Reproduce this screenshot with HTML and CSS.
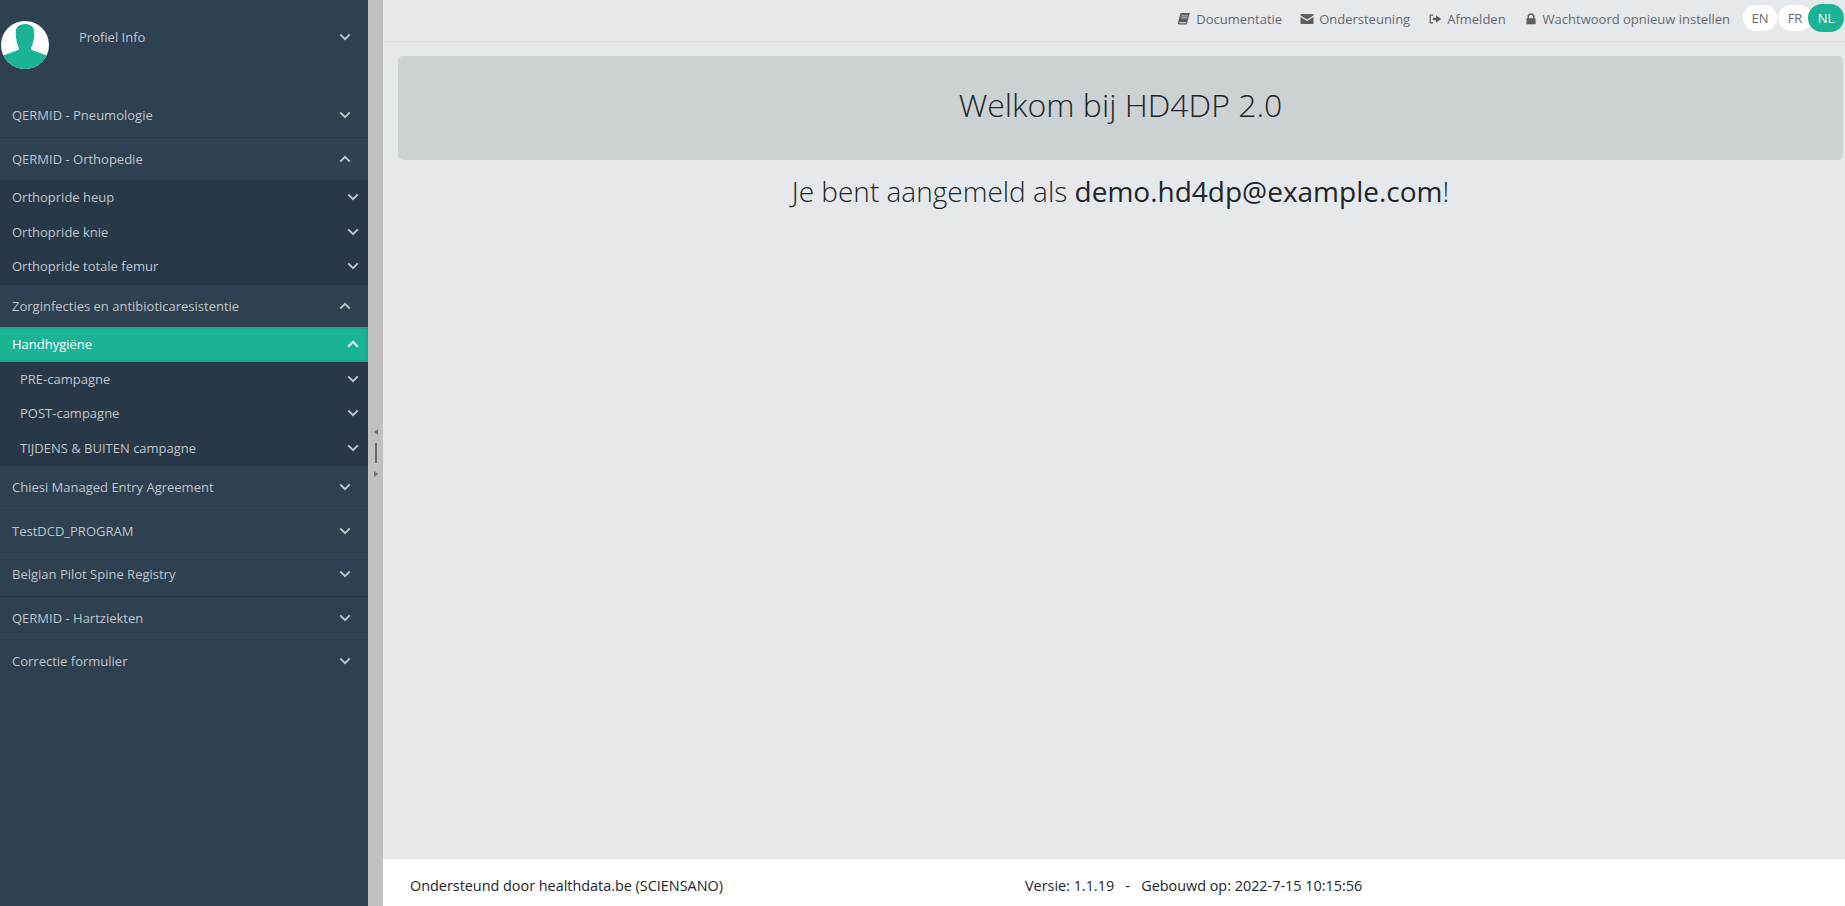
FILE: index.html
```html
<!DOCTYPE html>
<html lang="nl">
<head>
  <meta charset="UTF-8">
  <title>HD4DP 2.0</title>
  <link rel="stylesheet" href="styles.css">
</head>
<body>
  <svg class="icon-defs" aria-hidden="true">
    <symbol id="chev-down" viewBox="0 0 12 8"><path d="M1.2 1.4 6 6.2l4.8-4.8" fill="none" stroke="currentColor" stroke-width="1.9"/></symbol>
    <symbol id="chev-up" viewBox="0 0 12 8"><path d="M1.2 6.6 6 1.8l4.8 4.8" fill="none" stroke="currentColor" stroke-width="1.9"/></symbol>
  </svg>

  <!-- Sidebar -->
  <aside class="sidebar">
    <div class="profile">
      <svg class="avatar" viewBox="0 0 48 48">
        <circle cx="24" cy="24" r="24" fill="#fff"/>
        <clipPath id="avatarClip"><circle cx="24" cy="24" r="24"/></clipPath>
        <g clip-path="url(#avatarClip)" fill="#1ab394">
          <path d="M24 3c-6.500 0-9.300 3.500-9.300 9 0 5 1.300 11 3 14.500v2.300L1 35v13h46V35l-16.700-6.200v-2.300c1.700-3.500 3-9.500 3-14.500 0-5.500-2.800-9-9.300-9z"/>
        </g>
      </svg>
      <span class="profile-name">Profiel Info</span>
      <svg class="chev"><use href="#chev-down"/></svg>
    </div>

    <ul class="menu">
      <li class="menu-item">
        <a class="menu-head">QERMID - Pneumologie <svg class="chev"><use href="#chev-down"/></svg></a>
      </li>
      <li class="menu-item">
        <a class="menu-head">QERMID - Orthopedie <svg class="chev"><use href="#chev-up"/></svg></a>
        <ul class="submenu">
          <li><a class="sub-head">Orthopride heup <svg class="chev"><use href="#chev-down"/></svg></a></li>
          <li><a class="sub-head">Orthopride knie <svg class="chev"><use href="#chev-down"/></svg></a></li>
          <li><a class="sub-head">Orthopride totale femur <svg class="chev"><use href="#chev-down"/></svg></a></li>
        </ul>
      </li>
      <li class="menu-item">
        <a class="menu-head">Zorginfecties en antibioticaresistentie <svg class="chev"><use href="#chev-up"/></svg></a>
        <ul class="submenu">
          <li><a class="sub-head active">Handhygiëne <svg class="chev"><use href="#chev-up"/></svg></a></li>
          <li><a class="sub-head nested">PRE-campagne <svg class="chev"><use href="#chev-down"/></svg></a></li>
          <li><a class="sub-head nested">POST-campagne <svg class="chev"><use href="#chev-down"/></svg></a></li>
          <li><a class="sub-head nested">TIJDENS &amp; BUITEN campagne <svg class="chev"><use href="#chev-down"/></svg></a></li>
        </ul>
      </li>
      <li class="menu-item">
        <a class="menu-head">Chiesi Managed Entry Agreement <svg class="chev"><use href="#chev-down"/></svg></a>
      </li>
      <li class="menu-item">
        <a class="menu-head">TestDCD_PROGRAM <svg class="chev"><use href="#chev-down"/></svg></a>
      </li>
      <li class="menu-item">
        <a class="menu-head">Belgian Pilot Spine Registry <svg class="chev"><use href="#chev-down"/></svg></a>
      </li>
      <li class="menu-item">
        <a class="menu-head">QERMID - Hartziekten <svg class="chev"><use href="#chev-down"/></svg></a>
      </li>
      <li class="menu-item last">
        <a class="menu-head">Correctie formulier <svg class="chev"><use href="#chev-down"/></svg></a>
      </li>
    </ul>
  </aside>

  <!-- Drag handle between sidebar and page -->
  <div class="splitter">
    <span class="arrow-left"></span>
    <span class="grip"></span>
    <span class="arrow-right"></span>
  </div>

  <div class="page">
    <nav class="topbar">
      <a class="top-link">
        <svg class="top-icon" viewBox="0 0 14 14"><path d="M4 1h9l-.6 1.200L10 11.500c-.2.800-.6 1-1.400 1H2.300C1.200 12.500.6 11.600 1 10.500L3.200 2C3.300 1.400 3.500 1 4 1zm.9 2.500-.2.800h5.800l.2-.8zm-.6 2-.2.800h5.800l.2-.8zM2.600 10.300c-.3.700 0 1 .6 1h5.700l.3-1z" fill="currentColor" fill-rule="evenodd"/></svg>
        Documentatie
      </a>
      <a class="top-link">
        <svg class="top-icon" viewBox="0 0 14 14"><path d="M1.200 2h11.600c.4 0 .7.300.7.700v.9L7 7.600.5 3.600v-.9c0-.4.300-.7.700-.7zM.5 5.100 7 9.100l6.500-4v6.200c0 .4-.3.700-.7.700H1.200c-.4 0-.7-.3-.7-.7z" fill="currentColor"/></svg>
        Ondersteuning
      </a>
      <a class="top-link low">
        <svg class="top-icon" viewBox="0 0 14 14"><path d="M5 2.500H2.600c-.6 0-1 .4-1 1v7c0 .6.400 1 1 1H5v-1.200H2.900V3.700H5zM8 3.200v2.500H4.800v2.600H8v2.500L13.200 7z" fill="currentColor"/></svg>
        Afmelden
      </a>
      <a class="top-link low">
        <svg class="top-icon" viewBox="-1 -1 16 16"><path d="M3 6V4.500a4 4 0 0 1 8 0V6h.5c.4 0 .7.300.7.700v5.600c0 .4-.3.700-.7.700h-9c-.4 0-.7-.3-.7-.7V6.700c0-.4.300-.7.700-.7zm1.700 0h4.600V4.500a2.300 2.300 0 0 0-4.600 0z" fill="currentColor"/></svg>
        Wachtwoord opnieuw instellen
      </a>
      <div class="lang-switch">
        <span class="lang">EN</span>
        <span class="lang">FR</span>
        <span class="lang current">NL</span>
      </div>
    </nav>

    <main class="content">
      <div class="jumbotron">
        <h1>Welkom bij HD4DP 2.0</h1>
      </div>
      <h2 class="logged-in">Je bent aangemeld als <strong>demo.hd4dp@example.com</strong>!</h2>
    </main>

    <footer class="footer">
      <span class="support">Ondersteund door healthdata.be (SCIENSANO)</span>
      <span class="version">Versie: 1.1.19 &nbsp; - &nbsp; Gebouwd op: 2022-7-15 10:15:56</span>
    </footer>
  </div>
</body>
</html>
```

FILE: styles.css
```css
/* Basic layout */
html, body {
  margin: 0;
  padding: 0;
  height: 100%;
}
body {
  display: flex;
  height: 906px;
  overflow: hidden;
  font-family: "Open Sans", "Noto Sans", sans-serif;
  font-size: 13px;
  color: #676a6c;
  background: #e6e9ec;
}
.icon-defs {
  display: none;
}
ul {
  list-style: none;
  margin: 0;
  padding: 0;
}

/* Sidebar */
.sidebar {
  width: 368px;
  flex: none;
  background: #2f4050;
  color: #bfc5cb;
}
.chev {
  width: 12px;
  height: 8px;
  flex: none;
}
.profile {
  height: 94px;
  box-sizing: border-box;
  padding: 21px 17px 0 1px;
  display: flex;
  align-items: flex-start;
}
.avatar {
  width: 48px;
  height: 48px;
  flex: none;
}
.profile-name {
  margin: 7px 0 0 30px;
  flex: 1;
}
.profile .chev {
  margin-top: 12px;
}
.menu-item {
  border-bottom: 1px solid #293846;
}
.menu-item.last {
  border-bottom: none;
}
.menu-head {
  height: 42.500px;
  display: flex;
  align-items: center;
  justify-content: space-between;
  padding: 0 17px 0 12px;
}
.submenu {
  background: #293846;
}
.sub-head {
  height: 34.500px;
  display: flex;
  align-items: center;
  justify-content: space-between;
  padding: 0 9px 0 12px;
  box-sizing: border-box;
}
.sub-head.nested {
  padding-left: 20px;
}
.sub-head.active {
  background: #1ab394;
  border: 2px solid #18a98c;
  border-left: none;
  padding-left: 12px;
  padding-right: 7px;
  color: #fff;
}

/* Drag handle */
.splitter {
  width: 15px;
  flex: none;
  background: #c0c0c0;
  display: flex;
  flex-direction: column;
  align-items: center;
  justify-content: center;
  gap: 8px;
}
.grip {
  width: 2px;
  height: 20px;
  background: #6b6b6b;
}
.arrow-left, .arrow-right {
  width: 0;
  height: 0;
  border-top: 3px solid transparent;
  border-bottom: 3px solid transparent;
}
.arrow-left {
  border-right: 4px solid #6f7377;
}
.arrow-right {
  border-left: 4px solid #6f7377;
}

/* Page */
.page {
  flex: 1;
  min-width: 0;
  display: flex;
  flex-direction: column;
}
.topbar {
  height: 41px;
  flex: none;
  border-bottom: 1px solid #dde1e4;
  display: flex;
  justify-content: flex-end;
  align-items: flex-start;
  padding-right: 1px;
}
.top-link {
  display: flex;
  align-items: center;
  gap: 5px;
  height: 37px;
  margin-right: 18px;
  color: #676a6c;
}
.top-link.low {
  height: 38px;
}
.top-icon {
  width: 14px;
  height: 14px;
  color: #5c5f61;
}
.lang-switch {
  display: flex;
  align-items: center;
  height: 28px;
  margin: 4px 0 0 -5px;
  gap: 1px;
}
.lang {
  width: 34px;
  height: 26px;
  border-radius: 14px;
  background: #fff;
  display: flex;
  align-items: center;
  justify-content: center;
}
.lang.current {
  position: relative;
  width: 36px;
  height: 28px;
  margin-left: -5px;
  background: #1ab394;
  color: #fff;
}
.content {
  flex: 1;
  padding: 14px 2px 0 15px;
}
.jumbotron {
  height: 104px;
  box-sizing: border-box;
  padding-bottom: 7px;
  background: #ccd1d4;
  border-radius: 5px;
  display: flex;
  align-items: center;
  justify-content: center;
}
h1 {
  margin: 0;
  font-size: 32px;
  font-weight: 300;
  color: #212529;
}
.logged-in {
  margin: 12px 0 0;
  font-size: 28px;
  font-weight: 300;
  color: #212529;
  text-align: center;
}
.logged-in strong {
  font-weight: 400;
}
.footer {
  height: 48px;
  box-sizing: border-box;
  flex: none;
  background: #fff;
  border-top: 1px solid #dde1e4;
  display: flex;
  align-items: center;
  padding: 6px 0 0 27px;
  font-size: 14.400px;
  color: #212529;
}
.support {
  width: 615px;
}
```
